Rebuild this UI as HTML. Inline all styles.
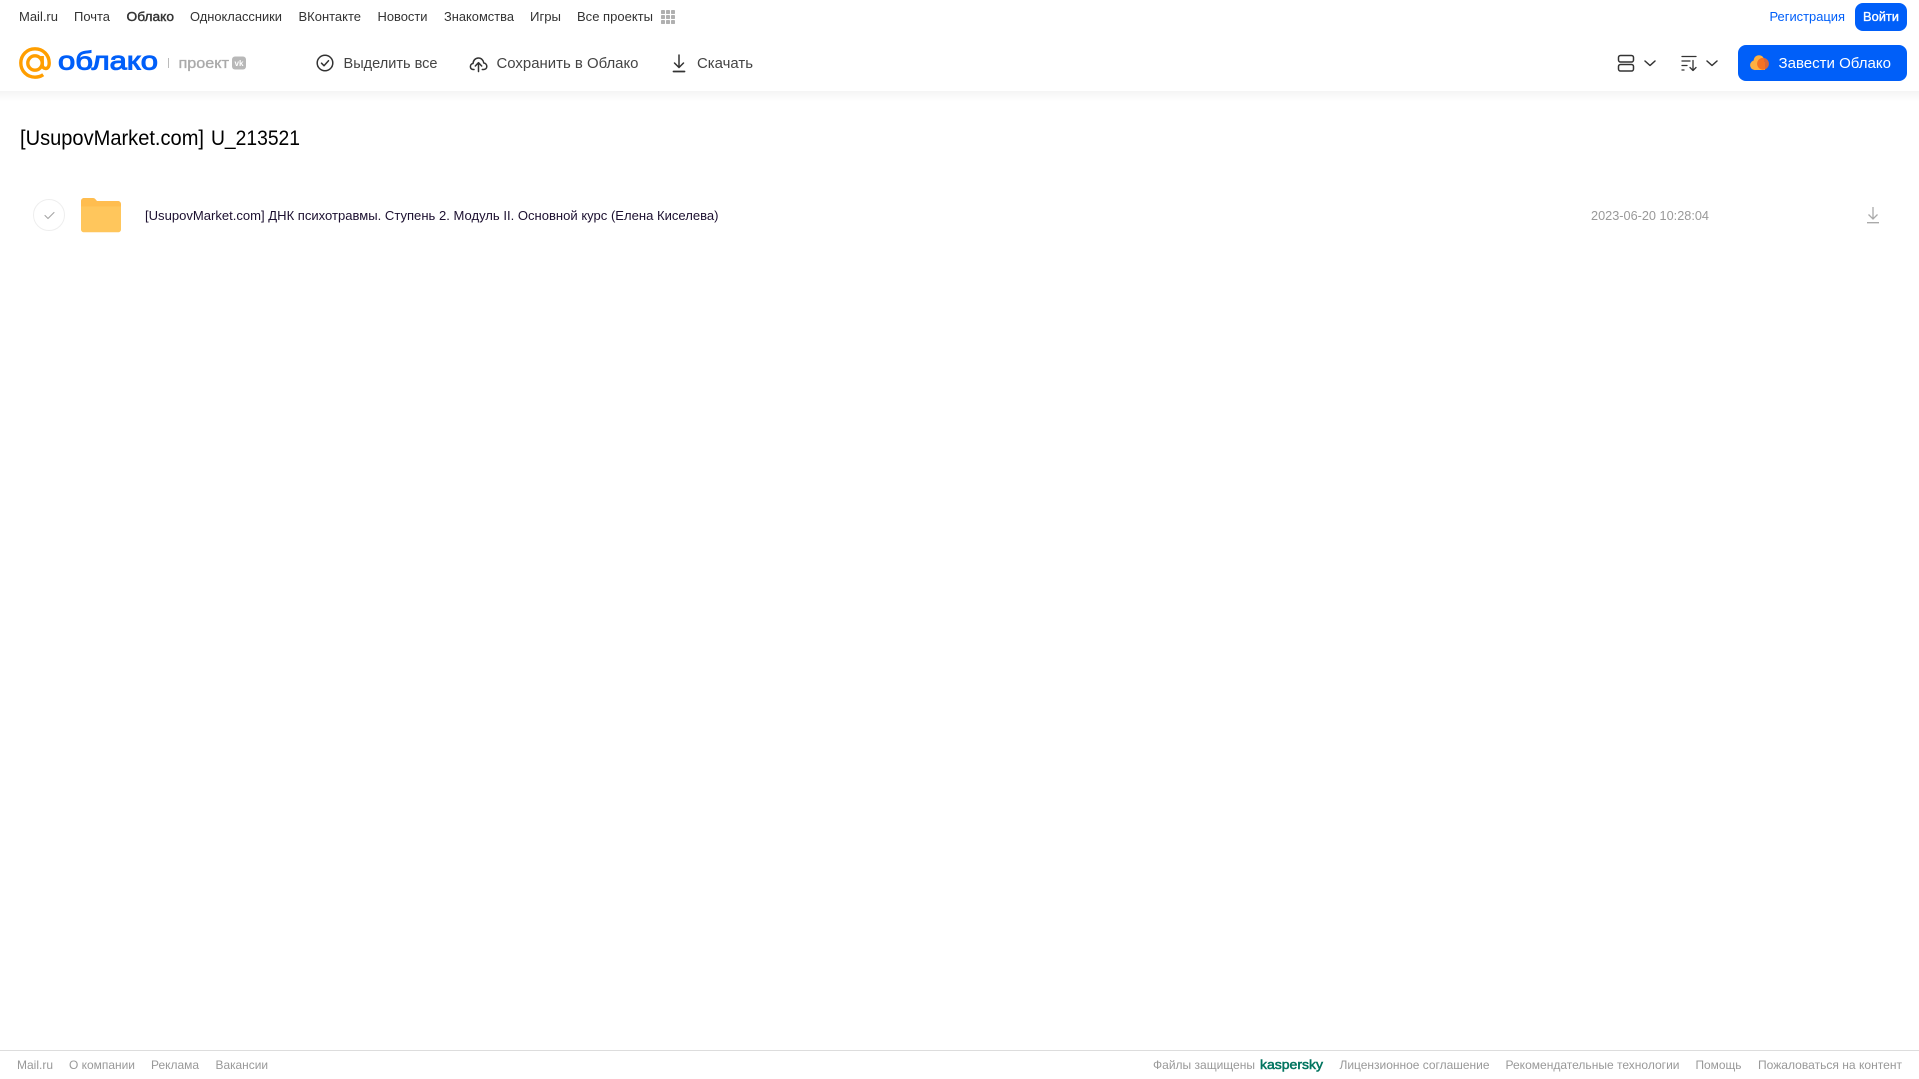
<!DOCTYPE html>
<html lang="ru"><head><meta charset="utf-8"><title>Облако</title>
<style>
html,body{margin:0;padding:0;width:1919px;height:1079px;overflow:hidden;background:#fff}
svg{position:absolute;left:0;top:0;display:block}
text{font-family:"Liberation Sans",Arial,sans-serif;white-space:pre}
.n{font-size:13px;fill:#333}
.t{font-size:15px;fill:#444}
.f{font-size:12px;fill:#999}
</style></head><body>
<svg width="1919" height="1079" viewBox="0 0 1919 1079" xmlns="http://www.w3.org/2000/svg">
<defs><linearGradient id="s" x1="0" y1="0" x2="0" y2="1"><stop offset="0" stop-color="#f4f4f4"/><stop offset="1" stop-color="#fff"/></linearGradient></defs>
<rect x="0" y="91" width="1919" height="11" fill="url(#s)"/>

<!-- top nav -->
<text class="n" x="19" y="21" textLength="39" lengthAdjust="spacingAndGlyphs">Mail.ru</text>
<text class="n" x="74" y="21" textLength="36" lengthAdjust="spacingAndGlyphs">Почта</text>
<text class="n" x="126.500" y="21" textLength="47.500" lengthAdjust="spacingAndGlyphs" style="stroke:#333;stroke-width:.4">Облако</text>
<text class="n" x="190" y="21" textLength="92" lengthAdjust="spacingAndGlyphs">Одноклассники</text>
<text class="n" x="298.500" y="21" textLength="62.500" lengthAdjust="spacingAndGlyphs">ВКонтакте</text>
<text class="n" x="377.500" y="21" textLength="50" lengthAdjust="spacingAndGlyphs">Новости</text>
<text class="n" x="444" y="21" textLength="70" lengthAdjust="spacingAndGlyphs">Знакомства</text>
<text class="n" x="530" y="21" textLength="31" lengthAdjust="spacingAndGlyphs">Игры</text>
<text class="n" x="577" y="21" textLength="76" lengthAdjust="spacingAndGlyphs">Все проекты</text>
<g fill="#b0b0b0">
<rect x="661" y="10" width="4" height="4" rx=".8"/><rect x="666" y="10" width="4" height="4" rx=".8"/><rect x="671" y="10" width="4" height="4" rx=".8"/>
<rect x="661" y="15" width="4" height="4" rx=".8"/><rect x="666" y="15" width="4" height="4" rx=".8"/><rect x="671" y="15" width="4" height="4" rx=".8"/>
<rect x="661" y="20" width="4" height="4" rx=".8"/><rect x="666" y="20" width="4" height="4" rx=".8"/><rect x="671" y="20" width="4" height="4" rx=".8"/>
</g>
<text class="n" x="1769.500" y="21" textLength="75.500" lengthAdjust="spacingAndGlyphs" style="fill:#005ff9">Регистрация</text>
<rect x="1855" y="3" width="52" height="28" rx="8" fill="#005ff9"/>
<text class="n" x="1863" y="21" textLength="36" lengthAdjust="spacingAndGlyphs" style="fill:#fff;stroke:#fff;stroke-width:.35">Войти</text>

<!-- logo -->
<g fill="none" stroke="#ff9e00" stroke-width="3.4">
<circle cx="35" cy="63" r="7.200"/>
<path d="M42.200 56v8.400c0 2.600 1.500 4.100 3.500 4.100s3.500-1.800 3.500-5.500c0-8.100-6.200-14.200-14.200-14.200S20.800 55 20.800 63s6.200 14.200 14.200 14.200c3.200 0 5.900-.9 8.200-2.500"/>
</g>
<text x="58" y="69.500" textLength="100" lengthAdjust="spacingAndGlyphs" style="font-size:26px;fill:#005ff9;stroke:#005ff9;stroke-width:1">облако</text>
<rect x="168" y="58" width="1" height="10" fill="#bbb"/>
<text x="178.500" y="68" textLength="50.500" lengthAdjust="spacingAndGlyphs" style="font-size:15px;fill:#aaa;stroke:#aaa;stroke-width:.35">проект</text>
<rect x="232" y="56.500" width="14" height="13" rx="3" fill="#b8b8b8"/>
<text x="234.500" y="66" textLength="9" lengthAdjust="spacingAndGlyphs" style="font-size:8px;font-weight:700;fill:#fff">vk</text>

<!-- toolbar -->
<g fill="none" stroke="#333" stroke-width="1.500" stroke-linecap="round" stroke-linejoin="round">
<circle cx="325" cy="63" r="7.800"/>
<path d="M321.500 63.200l2.500 2.500 4.500-5"/>
<path d="M474 69.500h-1c-1.700-.2-2.600-1.500-2.600-3 0-1.600 1.100-2.800 2.600-3 .3-3.200 2.400-5.500 5.400-5.500 2.800 0 5 2.100 5.400 5 1.700.1 3 1.600 3 3.400 0 1.800-1.300 3-3 3.100h-1.500"/>
<path d="M478.500 71.500v-8.500M475.300 66l3.200-3.300 3.200 3.300"/>
<path d="M679 55v12.500M674.500 63l4.500 4.500 4.500-4.500"/>
<path d="M673.500 71.500h11" stroke-width="1.800"/>
<rect x="1618.500" y="55.500" width="15" height="6.500" rx="2"/>
<rect x="1618.500" y="64.500" width="15" height="6.500" rx="2"/>
<path d="M1645 61l5 4.500 5-4.500M1707 61l5 4.500 5-4.500"/>
<path d="M1682 56.500h14M1682 61h8M1682 65.500h5M1682 70h2M1693 60.500v10M1690 67.500l3 3 3-3" stroke-width="1.300"/>
</g>
<text class="t" x="343.500" y="68" textLength="94" lengthAdjust="spacingAndGlyphs">Выделить все</text>
<text class="t" x="496.500" y="68" textLength="142" lengthAdjust="spacingAndGlyphs">Сохранить в Облако</text>
<text class="t" x="697" y="68" textLength="56" lengthAdjust="spacingAndGlyphs">Скачать</text>

<!-- cta -->
<rect x="1738" y="45" width="169" height="36" rx="8" fill="#005ff9"/>
<g fill="#ffb040">
<circle cx="1755" cy="65.200" r="4.900"/>
<circle cx="1759" cy="60.500" r="5.300"/>
<rect x="1755" y="62" width="10" height="8" />
</g>
<circle cx="1763" cy="63.800" r="5.900" fill="#f4691f" opacity=".88"/>
<text x="1778.500" y="68" textLength="112.500" lengthAdjust="spacingAndGlyphs" style="font-size:15px;fill:#fff">Завести Облако</text>

<!-- title -->
<text x="20" y="145" textLength="184" lengthAdjust="spacingAndGlyphs" style="font-size:21px;fill:#000">[UsupovMarket.com]</text>
<text x="211" y="145" textLength="89" lengthAdjust="spacingAndGlyphs" style="font-size:21px;fill:#000">U_213521</text>

<!-- row -->
<circle cx="49" cy="215" r="15.500" fill="#fff" stroke="#eee" stroke-width="1"/>
<path d="M45 215.500l3 3 6-6" fill="none" stroke="#a5a5a5" stroke-width="1.100" stroke-linecap="round" stroke-linejoin="round"/>
<path d="M81 201c0-1.700 1.300-3 3-3h9c1.200 0 2 .5 2.700 1.500l1.300 1.500h21c1.700 0 3 1.300 3 3v4H81z" fill="#ffbd4f"/>
<path d="M81 206.500h40v23c0 1.700-1.300 2.800-3 2.800H84c-1.700 0-3-1.100-3-2.800z" fill="#ffc65c"/>
<text x="145" y="220" textLength="573.500" lengthAdjust="spacingAndGlyphs" style="font-size:13px;fill:#1c1030">[UsupovMarket.com] ДНК психотравмы. Ступень 2. Модуль II. Основной курс (Елена Киселева)</text>
<text x="1591" y="220" textLength="118" lengthAdjust="spacingAndGlyphs" style="font-size:13px;fill:#999">2023-06-20 10:28:04</text>
<path d="M1873 207v12M1868.500 214.500l4.500 4.500 4.500-4.500M1867 222.700h12" fill="none" stroke="#aaa" stroke-width="1.300"/>

<!-- footer -->
<rect x="0" y="1050" width="1919" height="1" fill="#ddd"/>
<text class="f" x="17" y="1069" textLength="36" lengthAdjust="spacingAndGlyphs">Mail.ru</text>
<text class="f" x="69" y="1069" textLength="66" lengthAdjust="spacingAndGlyphs">О компании</text>
<text class="f" x="151" y="1069" textLength="48" lengthAdjust="spacingAndGlyphs">Реклама</text>
<text class="f" x="215.500" y="1069" textLength="52.500" lengthAdjust="spacingAndGlyphs">Вакансии</text>
<text class="f" x="1153" y="1069" textLength="102" lengthAdjust="spacingAndGlyphs">Файлы защищены</text>
<text x="1260" y="1069" textLength="63" lengthAdjust="spacingAndGlyphs" style="font-size:13px;fill:#00745f;stroke:#00745f;stroke-width:.5">kaspersky</text>
<text class="f" x="1339.500" y="1069" textLength="150" lengthAdjust="spacingAndGlyphs">Лицензионное соглашение</text>
<text class="f" x="1505.500" y="1069" textLength="174" lengthAdjust="spacingAndGlyphs">Рекомендательные технологии</text>
<text class="f" x="1695.500" y="1069" textLength="46" lengthAdjust="spacingAndGlyphs">Помощь</text>
<text class="f" x="1758" y="1069" textLength="144" lengthAdjust="spacingAndGlyphs">Пожаловаться на контент</text>
</svg>
</body></html>
